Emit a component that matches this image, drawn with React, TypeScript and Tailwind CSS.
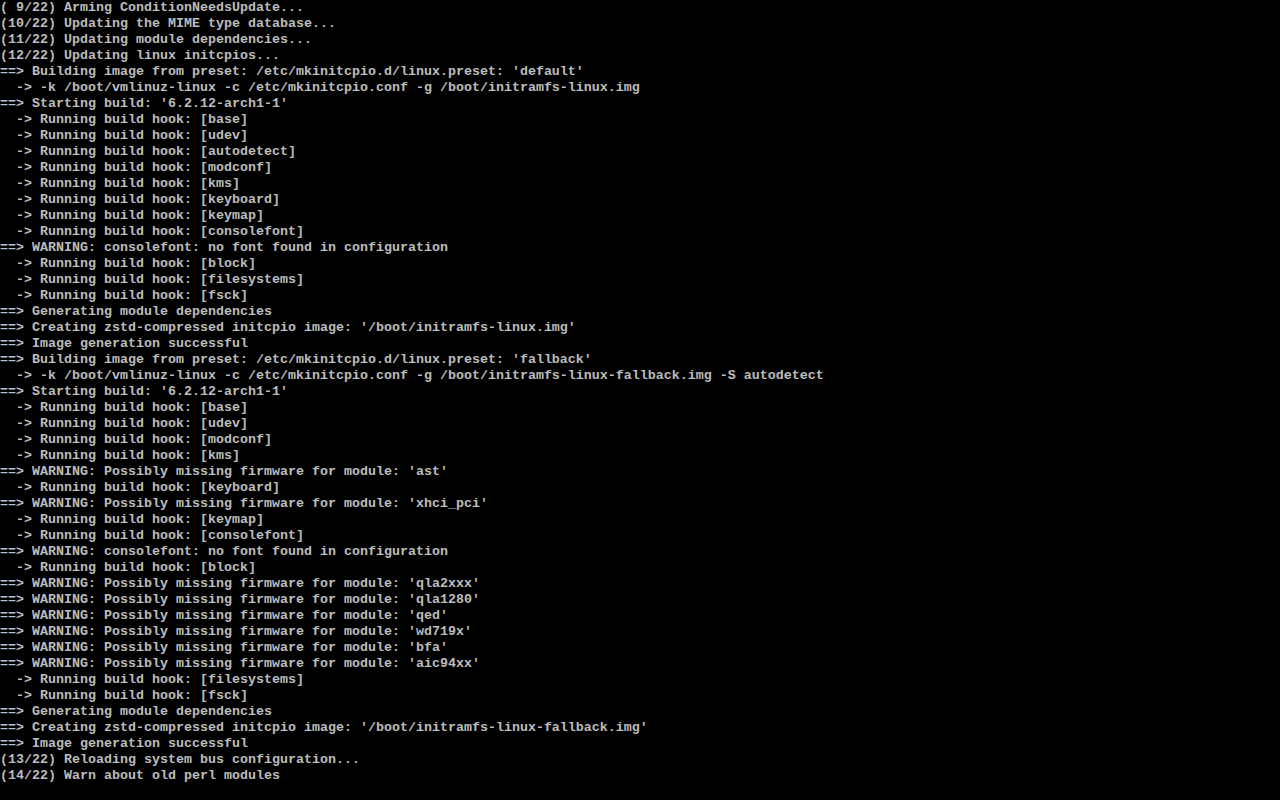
const lines = [
  "( 9/22) Arming ConditionNeedsUpdate...",
  "(10/22) Updating the MIME type database...",
  "(11/22) Updating module dependencies...",
  "(12/22) Updating linux initcpios...",
  "==> Building image from preset: /etc/mkinitcpio.d/linux.preset: 'default'",
  "  -> -k /boot/vmlinuz-linux -c /etc/mkinitcpio.conf -g /boot/initramfs-linux.img",
  "==> Starting build: '6.2.12-arch1-1'",
  "  -> Running build hook: [base]",
  "  -> Running build hook: [udev]",
  "  -> Running build hook: [autodetect]",
  "  -> Running build hook: [modconf]",
  "  -> Running build hook: [kms]",
  "  -> Running build hook: [keyboard]",
  "  -> Running build hook: [keymap]",
  "  -> Running build hook: [consolefont]",
  "==> WARNING: consolefont: no font found in configuration",
  "  -> Running build hook: [block]",
  "  -> Running build hook: [filesystems]",
  "  -> Running build hook: [fsck]",
  "==> Generating module dependencies",
  "==> Creating zstd-compressed initcpio image: '/boot/initramfs-linux.img'",
  "==> Image generation successful",
  "==> Building image from preset: /etc/mkinitcpio.d/linux.preset: 'fallback'",
  "  -> -k /boot/vmlinuz-linux -c /etc/mkinitcpio.conf -g /boot/initramfs-linux-fallback.img -S autodetect",
  "==> Starting build: '6.2.12-arch1-1'",
  "  -> Running build hook: [base]",
  "  -> Running build hook: [udev]",
  "  -> Running build hook: [modconf]",
  "  -> Running build hook: [kms]",
  "==> WARNING: Possibly missing firmware for module: 'ast'",
  "  -> Running build hook: [keyboard]",
  "==> WARNING: Possibly missing firmware for module: 'xhci_pci'",
  "  -> Running build hook: [keymap]",
  "  -> Running build hook: [consolefont]",
  "==> WARNING: consolefont: no font found in configuration",
  "  -> Running build hook: [block]",
  "==> WARNING: Possibly missing firmware for module: 'qla2xxx'",
  "==> WARNING: Possibly missing firmware for module: 'qla1280'",
  "==> WARNING: Possibly missing firmware for module: 'qed'",
  "==> WARNING: Possibly missing firmware for module: 'wd719x'",
  "==> WARNING: Possibly missing firmware for module: 'bfa'",
  "==> WARNING: Possibly missing firmware for module: 'aic94xx'",
  "  -> Running build hook: [filesystems]",
  "  -> Running build hook: [fsck]",
  "==> Generating module dependencies",
  "==> Creating zstd-compressed initcpio image: '/boot/initramfs-linux-fallback.img'",
  "==> Image generation successful",
  "(13/22) Reloading system bus configuration...",
  "(14/22) Warn about old perl modules",
];

export default function App() {
  return (
    <div className="w-[1280px] h-[800px] bg-black overflow-hidden">
      <div className="flex flex-col font-['Liberation_Mono',monospace] text-[13.333px] leading-[16px] font-bold text-[#bdbdbd]">
        {lines.map((line, i) => (
          <div key={i} className="h-4 whitespace-pre">{line}</div>
        ))}
      </div>
    </div>
  );
}
